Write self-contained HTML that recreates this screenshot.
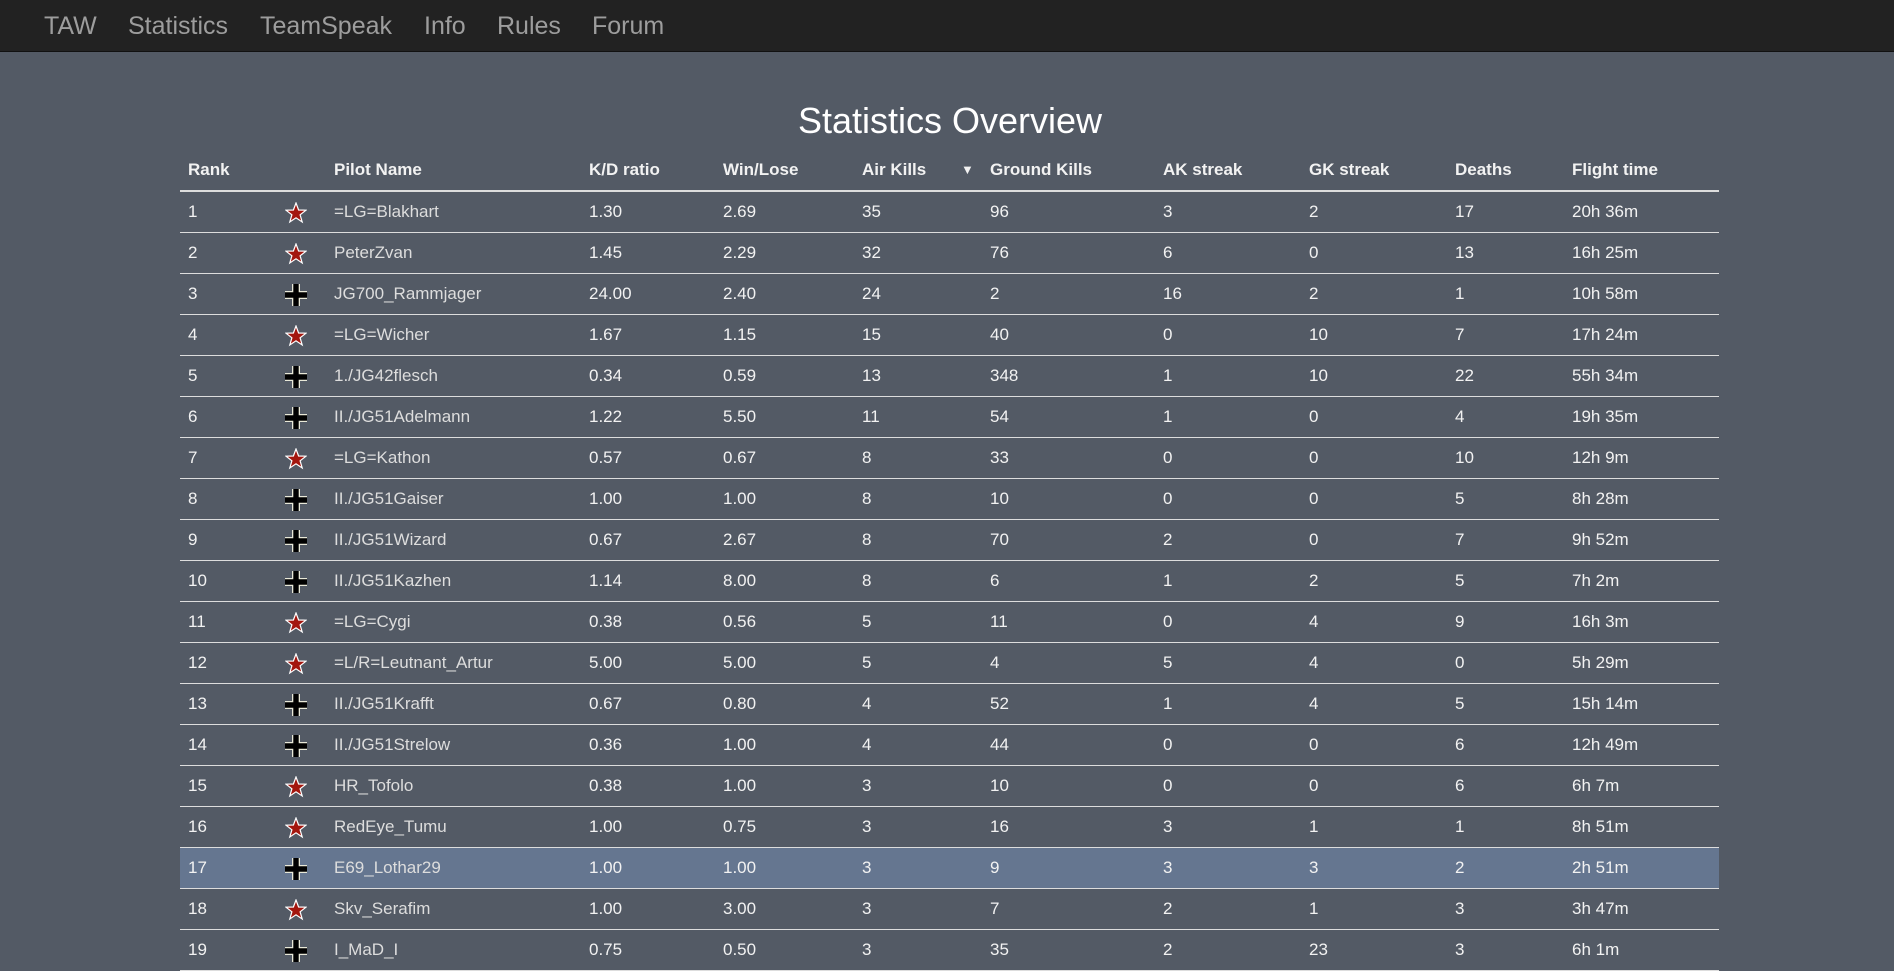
<!DOCTYPE html>
<html><head><style>
body{margin:0;width:1894px;height:962px;overflow:hidden;background:#535a65;font-family:"Liberation Sans",Arial,sans-serif;color:#f2f2f2}
.nav{position:absolute;left:0;top:0;width:1894px;height:51px;background:#222;border-bottom:1px solid #111}
.nav span{position:absolute;top:12px;font-size:25px;color:#9d9d9d}
h1{position:absolute;top:100px;left:0;width:1900px;text-align:center;margin:0;font-size:36px;font-weight:normal;color:#fff}
.row{position:absolute;left:180px;width:1539px;height:40px;border-bottom:1px solid #ddd}
.row div{position:absolute;top:10px;font-size:17px;white-space:nowrap}
.hd{top:150px;height:40px;border-bottom:2px solid #ddd}
.hd div{font-weight:bold;top:10px}
.hl{background:#657690}
.n{color:#ddd}
svg{position:absolute;left:105px;top:10px}
</style></head><body>
<div class="nav"><span style="left:44px">TAW</span><span style="left:128px">Statistics</span><span style="left:260px">TeamSpeak</span><span style="left:424px">Info</span><span style="left:497px">Rules</span><span style="left:592px">Forum</span></div>
<h1>Statistics Overview</h1>
<div class="row hd"><div style="left:8px">Rank</div><div style="left:154px">Pilot Name</div><div style="left:409px">K/D ratio</div><div style="left:543px">Win/Lose</div><div style="left:682px">Air Kills</div><div style="left:781px;top:12px;font-size:13px">&#9660;</div><div style="left:810px">Ground Kills</div><div style="left:983px">AK streak</div><div style="left:1129px">GK streak</div><div style="left:1275px">Deaths</div><div style="left:1392px">Flight time</div></div>
<div id="t"></div>
<script>
var d=[["1","s","=LG=Blakhart","1.30","2.69","35","96","3","2","17","20h 36m"],
["2","s","PeterZvan","1.45","2.29","32","76","6","0","13","16h 25m"],
["3","c","JG700_Rammjager","24.00","2.40","24","2","16","2","1","10h 58m"],
["4","s","=LG=Wicher","1.67","1.15","15","40","0","10","7","17h 24m"],
["5","c","1./JG42flesch","0.34","0.59","13","348","1","10","22","55h 34m"],
["6","c","II./JG51Adelmann","1.22","5.50","11","54","1","0","4","19h 35m"],
["7","s","=LG=Kathon","0.57","0.67","8","33","0","0","10","12h 9m"],
["8","c","II./JG51Gaiser","1.00","1.00","8","10","0","0","5","8h 28m"],
["9","c","II./JG51Wizard","0.67","2.67","8","70","2","0","7","9h 52m"],
["10","c","II./JG51Kazhen","1.14","8.00","8","6","1","2","5","7h 2m"],
["11","s","=LG=Cygi","0.38","0.56","5","11","0","4","9","16h 3m"],
["12","s","=L/R=Leutnant_Artur","5.00","5.00","5","4","5","4","0","5h 29m"],
["13","c","II./JG51Krafft","0.67","0.80","4","52","1","4","5","15h 14m"],
["14","c","II./JG51Strelow","0.36","1.00","4","44","0","0","6","12h 49m"],
["15","s","HR_Tofolo","0.38","1.00","3","10","0","0","6","6h 7m"],
["16","s","RedEye_Tumu","1.00","0.75","3","16","3","1","1","8h 51m"],
["17","c","E69_Lothar29","1.00","1.00","3","9","3","3","2","2h 51m"],
["18","s","Skv_Serafim","1.00","3.00","3","7","2","1","3","3h 47m"],
["19","c","I_MaD_I","0.75","0.50","3","35","2","23","3","6h 1m"]];
var xs=[8,0,154,409,543,682,810,983,1129,1275,1392];
var star='<svg width="22" height="22" viewBox="0 0 22 22"><polygon points="11,1 13.6,8 21,8.2 15.1,12.8 17.2,20 11,15.8 4.8,20 6.9,12.8 1,8.2 8.4,8" fill="#a3160e" stroke="#fff" stroke-width="1.2"/></svg>';
var cross='<svg width="22" height="22" viewBox="0 0 22 22"><path d="M7,0h8v7h7v8h-7v7h-8v-7h-7v-8h7z" fill="#e8e8d8"/><path d="M8.3,0h5.4v8.3h8.3v5.4h-8.3v8.3h-5.4v-8.3h-8.3v-5.4h8.3z" fill="#000"/></svg>';
var h='';
d.forEach(function(r,i){h+='<div class="row'+(i==16?' hl':'')+'" style="top:'+(192+i*41)+'px">';
for(var j=0;j<11;j++){if(j==1){h+=(r[1]=='s'?star:cross);continue;}
h+='<div'+(j==2?' class="n"':'')+' style="left:'+xs[j]+'px">'+r[j]+'</div>';}
h+='</div>';});
document.getElementById('t').innerHTML=h;
</script>
</body></html>
